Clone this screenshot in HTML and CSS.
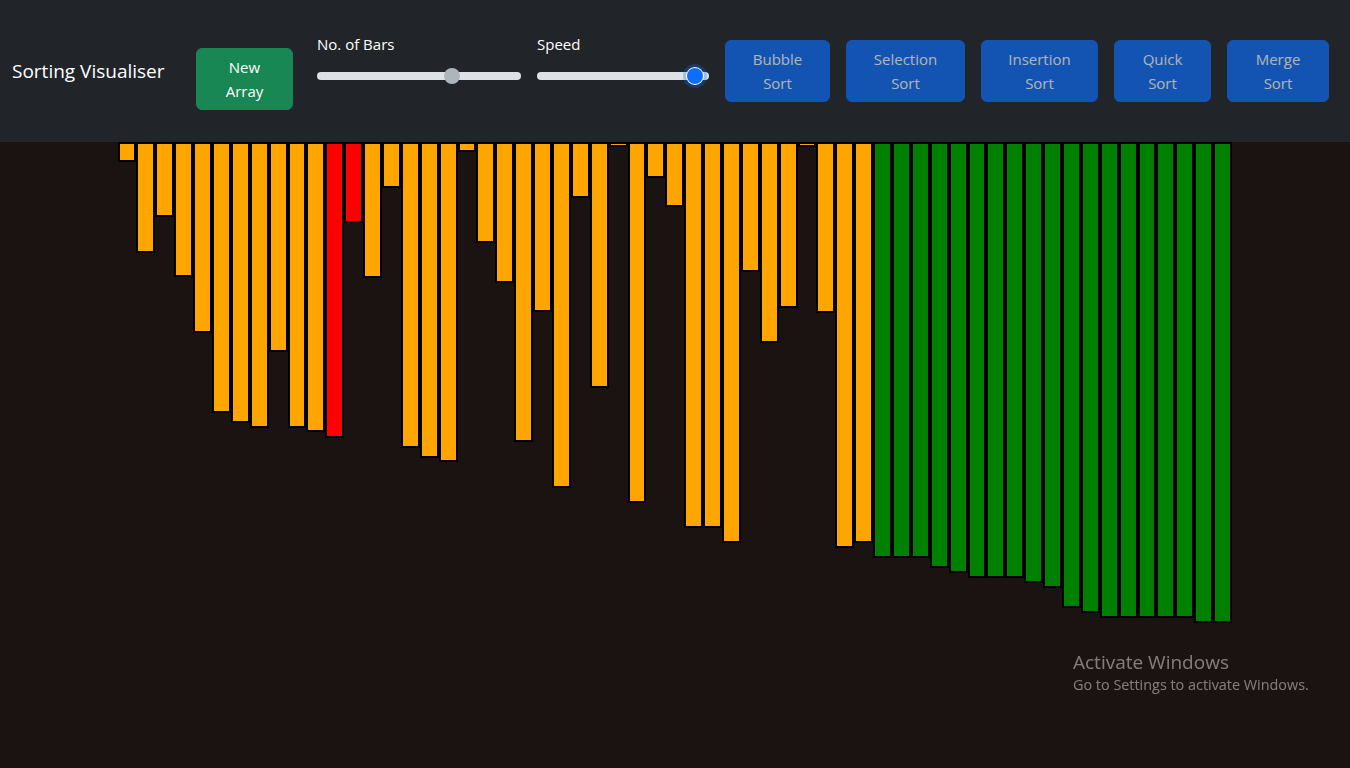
FILE: index.html
```html
<!DOCTYPE html>
<html lang="en">
<head>
<meta charset="utf-8">
<title>Sorting Visualiser</title>
<link rel="stylesheet" href="styles.css">
</head>
<body>
<header class="navbar">
  <span class="brand">Sorting Visualiser</span>
  <button class="btn btn-new" type="button">New Array</button>
  <div class="range-group range-group-bars">
    <label class="range-label" for="bars">No. of Bars</label>
    <input class="range range-bars" id="bars" type="range" min="5" max="85" value="59" disabled>
  </div>
  <div class="range-group range-group-speed">
    <label class="range-label" for="speed">Speed</label>
    <input class="range range-speed range-focus" id="speed" type="range" min="1" max="100" value="96">
  </div>
  <nav class="sort-buttons">
    <button class="btn btn-sort btn-bubble" type="button" disabled>Bubble Sort</button>
    <button class="btn btn-sort btn-selection" type="button" disabled>Selection Sort</button>
    <button class="btn btn-sort btn-insertion" type="button" disabled>Insertion Sort</button>
    <button class="btn btn-sort btn-quick" type="button" disabled>Quick Sort</button>
    <button class="btn btn-sort btn-merge" type="button" disabled>Merge Sort</button>
  </nav>
</header>
<main class="stage">
  <div class="bars">
    <div class="bar" style="height:20px"></div>
    <div class="bar" style="height:111px"></div>
    <div class="bar" style="height:75px"></div>
    <div class="bar" style="height:135px"></div>
    <div class="bar" style="height:191px"></div>
    <div class="bar" style="height:271px"></div>
    <div class="bar" style="height:281px"></div>
    <div class="bar" style="height:286px"></div>
    <div class="bar" style="height:210px"></div>
    <div class="bar" style="height:286px"></div>
    <div class="bar" style="height:290px"></div>
    <div class="bar bar-compare" style="height:296px"></div>
    <div class="bar bar-compare" style="height:81px"></div>
    <div class="bar" style="height:136px"></div>
    <div class="bar" style="height:46px"></div>
    <div class="bar" style="height:306px"></div>
    <div class="bar" style="height:316px"></div>
    <div class="bar" style="height:320px"></div>
    <div class="bar" style="height:10px"></div>
    <div class="bar" style="height:101px"></div>
    <div class="bar" style="height:141px"></div>
    <div class="bar" style="height:300px"></div>
    <div class="bar" style="height:170px"></div>
    <div class="bar" style="height:346px"></div>
    <div class="bar" style="height:56px"></div>
    <div class="bar" style="height:246px"></div>
    <div class="bar" style="height:5px"></div>
    <div class="bar" style="height:361px"></div>
    <div class="bar" style="height:36px"></div>
    <div class="bar" style="height:65px"></div>
    <div class="bar" style="height:386px"></div>
    <div class="bar" style="height:386px"></div>
    <div class="bar" style="height:401px"></div>
    <div class="bar" style="height:130px"></div>
    <div class="bar" style="height:201px"></div>
    <div class="bar" style="height:166px"></div>
    <div class="bar" style="height:5px"></div>
    <div class="bar" style="height:171px"></div>
    <div class="bar" style="height:406px"></div>
    <div class="bar" style="height:401px"></div>
    <div class="bar bar-sorted" style="height:416px"></div>
    <div class="bar bar-sorted" style="height:416px"></div>
    <div class="bar bar-sorted" style="height:416px"></div>
    <div class="bar bar-sorted" style="height:426px"></div>
    <div class="bar bar-sorted" style="height:431px"></div>
    <div class="bar bar-sorted" style="height:436px"></div>
    <div class="bar bar-sorted" style="height:436px"></div>
    <div class="bar bar-sorted" style="height:436px"></div>
    <div class="bar bar-sorted" style="height:441px"></div>
    <div class="bar bar-sorted" style="height:446px"></div>
    <div class="bar bar-sorted" style="height:466px"></div>
    <div class="bar bar-sorted" style="height:471px"></div>
    <div class="bar bar-sorted" style="height:476px"></div>
    <div class="bar bar-sorted" style="height:476px"></div>
    <div class="bar bar-sorted" style="height:476px"></div>
    <div class="bar bar-sorted" style="height:476px"></div>
    <div class="bar bar-sorted" style="height:476px"></div>
    <div class="bar bar-sorted" style="height:481px"></div>
    <div class="bar bar-sorted" style="height:481px"></div>
  </div>
</main>
<div class="watermark">
  <div class="watermark-title">Activate Windows</div>
  <div class="watermark-sub">Go to Settings to activate Windows.</div>
</div>
</body>
</html>
```

FILE: styles.css
```css
* {
  box-sizing: border-box;
}

html, body {
  margin: 0;
  padding: 0;
}

body {
  min-height: 768px;
  background: #1b1311;
  font-family: "Open Sans", "Noto Sans", "Liberation Sans", sans-serif;
  color: #fff;
}

.navbar {
  height: 142px;
  background: #212529;
  display: flex;
  align-items: center;
  padding: 0 21px 0 12px;
}

.navbar > * {
  flex-shrink: 0;
}

.brand {
  width: 152px;
  font-size: 19px;
  line-height: 30px;
  white-space: nowrap;
  color: #fff;
  margin-right: 32px;
}

.btn {
  font-family: inherit;
  font-size: 15px;
  line-height: 24px;
  color: #fff;
  text-align: center;
  border-radius: 6px;
  padding: 6px 0;
  height: 62px;
  cursor: pointer;
  flex-shrink: 0;
}

.btn-new {
  width: 97px;
  margin-top: 15px;
  margin-right: 24px;
  padding: 6px 26px;
  background: #198754;
  border: 1px solid #198754;
}

.range-group {
  align-self: flex-start;
  margin-top: 32px;
  display: flex;
  flex-direction: column;
}

.range-group-bars {
  width: 204px;
  margin-right: 16px;
}

.range-group-speed {
  width: 172px;
  margin-right: 16px;
}

.range-label {
  font-size: 15px;
  line-height: 24px;
  color: #fff;
  margin-bottom: 12px;
}

.range {
  -webkit-appearance: none;
  appearance: none;
  display: block;
  width: 100%;
  height: 16px;
  margin: 0;
  padding: 0;
  background: transparent;
}

.range::-webkit-slider-runnable-track {
  height: 8px;
  background: #dee2e6;
  border-radius: 4px;
}

.range::-webkit-slider-thumb {
  -webkit-appearance: none;
  appearance: none;
  width: 16px;
  height: 16px;
  margin-top: -4px;
  border: 0;
  border-radius: 50%;
  background: #0d6efd;
}

.range:disabled::-webkit-slider-thumb {
  background: #adb5bd;
}

.range-focus::-webkit-slider-thumb {
  box-shadow: 0 0 0 1px #fff, 0 0 0 4px rgba(13, 110, 253, 0.3);
}

.sort-buttons {
  display: flex;
  gap: 16px;
}

.btn-sort {
  background: #0d6efd;
  border: 1px solid #0d6efd;
  padding: 6px 20px;
}

.btn-sort:disabled {
  opacity: 0.65;
  cursor: default;
}

.btn-bubble { width: 105px; }
.btn-selection { width: 119px; }
.btn-insertion { width: 117px; }
.btn-quick { width: 97px; }
.btn-merge { width: 102px; }

.stage {
  display: flex;
  justify-content: center;
}

.bars {
  width: 1115px;
  display: flex;
  align-items: flex-start;
}

.bar {
  flex: 1 1 0;
  min-width: 0;
  background: #ffa500;
  border: 2px solid #000;
}

.bar-compare {
  background: #ff0000;
}

.bar-sorted {
  background: #008000;
}

.watermark {
  position: fixed;
  left: 1073px;
  top: 649px;
  color: rgba(255, 255, 255, 0.45);
  pointer-events: none;
}

.watermark-title {
  font-size: 19px;
  line-height: 26px;
}

.watermark-sub {
  font-size: 14.4px;
  line-height: 20px;
}
```
